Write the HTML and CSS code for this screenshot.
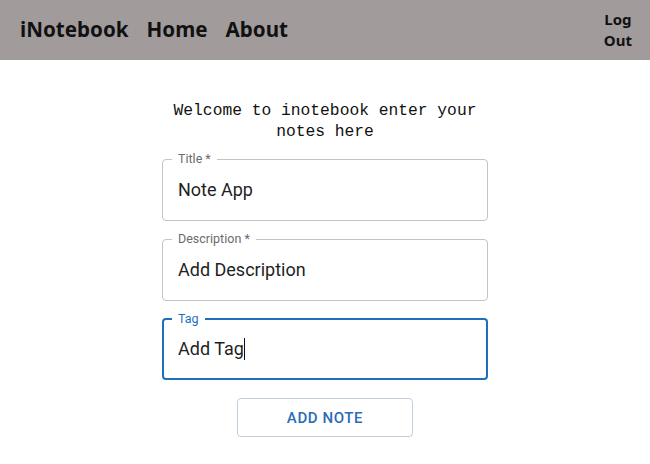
FILE: index.html
```html
<!DOCTYPE html>
<html>
<head>
<meta charset="utf-8">
<link rel="stylesheet" href="styles.css">
</head>
<body>
<nav class="navbar">
  <div class="nav-links">
    <a class="brand">iNotebook</a>
    <a class="nav-link">Home</a>
    <a class="nav-link">About</a>
  </div>
  <a class="logout">Log<br>Out</a>
</nav>
<main class="main">
  <h2 class="welcome">Welcome to inotebook enter your notes here</h2>
  <form class="form">
    <fieldset class="field">
      <legend class="field-label">Title *</legend>
      <div class="field-input">Note App</div>
    </fieldset>
    <fieldset class="field">
      <legend class="field-label">Description *</legend>
      <div class="field-input">Add Description</div>
    </fieldset>
    <fieldset class="field field-focused">
      <legend class="field-label">Tag</legend>
      <div class="field-input">Add Tag<span class="caret"></span></div>
    </fieldset>
    <button type="button" class="add-btn">ADD NOTE</button>
  </form>
</main>
</body>
</html>
```
FILE: styles.css
```css
* { box-sizing: border-box; }
body {
  margin: 0;
  background: #fff;
  font-family: Roboto, "Noto Sans", sans-serif;
}
.navbar {
  height: 60px;
  background: #a19b9c;
  display: flex;
  align-items: center;
  justify-content: space-between;
  padding: 0 18px 0 20px;
}
.nav-links {
  display: flex;
  gap: 18px;
  align-items: center;
}
.brand, .nav-link {
  font-family: "Noto Sans", sans-serif;
  font-weight: 700;
  font-size: 20.6px;
  color: #111;
  margin-top: -2px;
}
.logout {
  font-family: "Noto Sans", sans-serif;
  font-weight: 700;
  font-size: 15px;
  line-height: 21px;
  color: #111;
  text-align: center;
}
.main {
  width: 326px;
  margin: 0 auto;
}
.welcome {
  margin: 40px -8px 10px;
  font-family: "Liberation Mono", monospace;
  font-weight: 400;
  font-size: 16.3px;
  line-height: 21px;
  text-align: center;
  color: #111;
}
.form {
  display: flex;
  flex-direction: column;
  align-items: center;
}
.field {
  width: 326px;
  margin: 0 0 11px;
  border: 1px solid #c4c4c4;
  border-radius: 4px;
  padding: 0 15px 18px;
}
.field-label {
  font-size: 12.5px;
  line-height: 14px;
  color: #6b6b6b;
  padding: 0 6px;
  margin-left: -6px;
}
.field-input {
  padding-top: 12px;
  font-size: 18px;
  line-height: 24px;
  color: #1f1f1f;
}
.field-focused {
  border: 2px solid #1f6fbf;
  padding: 0 14px 17px;
}
.field-focused .field-label {
  color: #1f6fbf;
}
.field-focused .field-input {
  padding-top: 11px;
}
.caret {
  display: inline-block;
  width: 1px;
  height: 22px;
  background: #111;
  vertical-align: -5px;
}
.add-btn {
  margin-top: 7px;
  width: 176px;
  height: 39px;
  background: #fff;
  border: 1px solid #c3cedc;
  border-radius: 4px;
  font-family: Roboto, sans-serif;
  font-weight: 500;
  font-size: 15px;
  letter-spacing: 0.6px;
  color: #2a6cb8;
}
```
